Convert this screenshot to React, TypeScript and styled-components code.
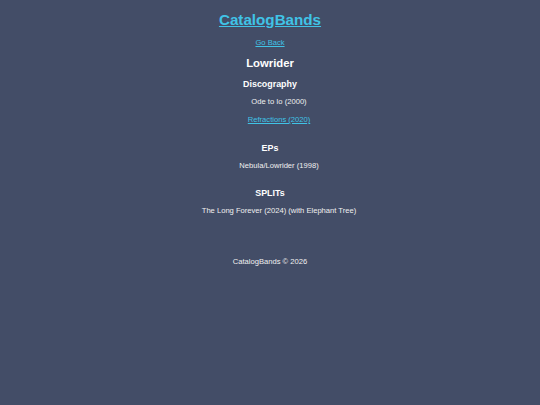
import React from 'react'
import styled, { createGlobalStyle } from 'styled-components'

const GlobalStyle = createGlobalStyle`
  html, body {
    margin: 0;
    padding: 0;
    background: #434d67;
  }
  body {
    font-family: "Liberation Sans", Arial, sans-serif;
    color: #f2f2f2;
  }
`

const Page = styled.div`
  min-height: 405px;
  padding-top: 11px;
  text-align: center;
  box-sizing: border-box;
`

const Header = styled.header`
  display: flex;
  flex-direction: column;
  align-items: center;
`

const SiteTitle = styled.a`
  font-size: 15.2px;
  line-height: 18px;
  font-weight: bold;
  color: #40c3e6;
  text-decoration: underline;
`

const BackLink = styled.a`
  margin-top: 9px;
  font-size: 7.6px;
  line-height: 10px;
  color: #40c3e6;
  text-decoration: underline;
`

const Main = styled.main`
  display: flex;
  flex-direction: column;
  align-items: stretch;
`

const BandName = styled.h2`
  margin: 8px 0 0;
  font-size: 11.3px;
  line-height: 14px;
  font-weight: bold;
  color: #ffffff;
`

const Section = styled.section<{ $first?: boolean }>`
  margin-top: ${p => (p.$first ? '6px' : '10.5px')};
`

const SectionTitle = styled.h3`
  margin: 0;
  font-size: 8.9px;
  line-height: 17px;
  font-weight: bold;
  color: #ffffff;
`

const ReleaseList = styled.ul`
  list-style: none;
  margin: 0;
  padding: 0 0 0 18px;
`

const Release = styled.li`
  font-size: 7.6px;
  line-height: 18px;
  color: #f0f0f0;
`

const ReleaseLink = styled.a`
  color: #40c3e6;
  text-decoration: underline;
`

const Footer = styled.footer`
  margin-top: 37px;
  font-size: 7.6px;
  line-height: 10px;
  color: #f0f0f0;
`

type Item = { title: string; href?: string }

const sections: { name: string; items: Item[] }[] = [
  {
    name: 'Discography',
    items: [
      { title: 'Ode to Io (2000)' },
      { title: 'Refractions (2020)', href: '#' },
    ],
  },
  { name: 'EPs', items: [{ title: 'Nebula/Lowrider (1998)' }] },
  { name: 'SPLITs', items: [{ title: 'The Long Forever (2024) (with Elephant Tree)' }] },
]

export default function App() {
  return (
    <>
      <GlobalStyle />
      <Page>
        <Header>
          <SiteTitle href="#">CatalogBands</SiteTitle>
          <BackLink href="#">Go Back</BackLink>
        </Header>
        <Main>
          <BandName>Lowrider</BandName>
          {sections.map((s, i) => (
            <Section key={s.name} $first={i === 0}>
              <SectionTitle>{s.name}</SectionTitle>
              <ReleaseList>
                {s.items.map(item => (
                  <Release key={item.title}>
                    {item.href ? (
                      <ReleaseLink href={item.href}>{item.title}</ReleaseLink>
                    ) : (
                      item.title
                    )}
                  </Release>
                ))}
              </ReleaseList>
            </Section>
          ))}
        </Main>
        <Footer>CatalogBands © 2026</Footer>
      </Page>
    </>
  )
}
